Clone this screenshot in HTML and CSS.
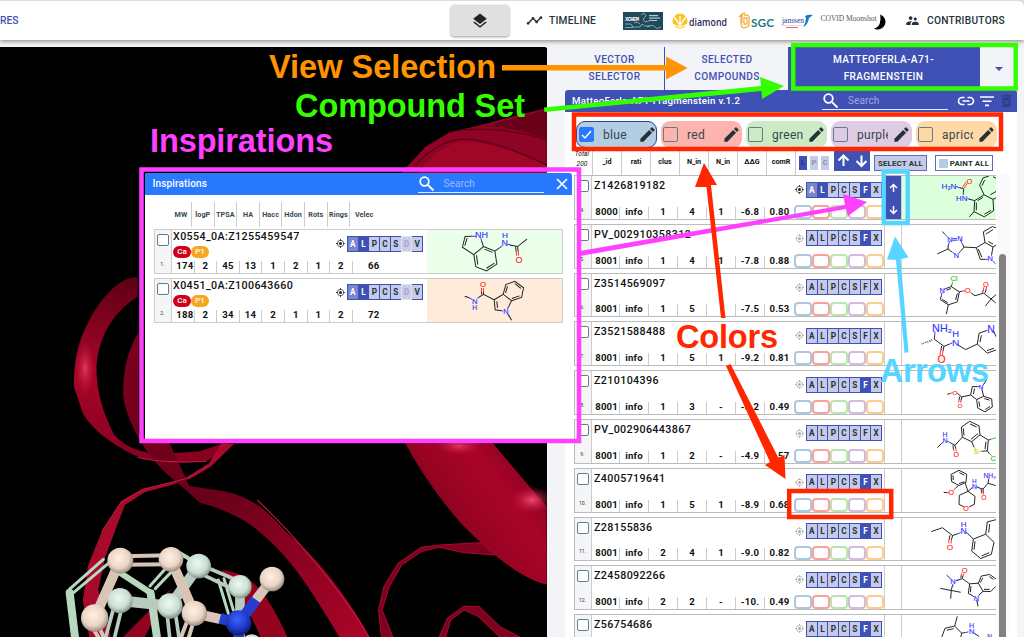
FILE: index.html
```html
<!DOCTYPE html>
<html lang="en">
<head>
<meta charset="utf-8">
<title>Fragalysis</title>
<link rel="stylesheet" href="styles.css">
</head>
<body>
<header class="topbar">
  <span class="nav-link">RES</span>
  <button class="view-btn" aria-label="Layers"><svg width="18" height="18" viewBox="0 0 24 24"><path fill="#222" d="M12 16l7.36-5.73L21 9l-9-7-9 7 1.63 1.27zM12 18.54l-7.38-5.73L3 14.07l9 7 9-7-1.63-1.27z"/></svg></button>
  <div class="nav-item timeline"><svg width="17" height="17" viewBox="0 0 24 24"><path fill="#263238" d="M23 8c0 1.1-.9 2-2 2-.18 0-.35-.02-.51-.07l-3.56 3.55c.05.16.07.34.07.52 0 1.1-.9 2-2 2s-2-.9-2-2c0-.18.02-.36.07-.52l-2.55-2.55c-.16.05-.34.07-.52.07s-.36-.02-.52-.07l-4.55 4.56c.05.16.07.33.07.51 0 1.1-.9 2-2 2s-2-.9-2-2 .9-2 2-2c.18 0 .35.02.51.07l4.56-4.55C8.02 9.36 8 9.18 8 9c0-1.1.9-2 2-2s2 .9 2 2c0 .18-.02.36-.07.52l2.55 2.55c.16-.05.34-.07.52-.07s.36.02.52.07l3.55-3.56C19.02 8.35 19 8.18 19 8c0-1.1.9-2 2-2s2 .9 2 2z"/></svg>TIMELINE</div>
  <svg class="logos" width="266" height="30" viewBox="622 3 266 30">
    <rect x="623" y="9" width="40" height="18" fill="#20495c"/>
    <text x="625" y="18" class="lg-xchem" textLength="14">XCHEM</text>
    <g fill="none" stroke="#b6cbd3" stroke-width=".7"><path d="M625 21h6l2 3h7l2-3 3 2h5M625 24.500h8M641 12l3-2 2 3-3 3 2 3 4-1M647 24q6-3 8 0t6 0M634 20l3-1 3 2"/></g>
    <g fill="#b6cbd3"><rect x="649" y="12" width="9" height="1.200"/><rect x="649" y="14.500" width="11" height="1.200"/><rect x="649" y="17" width="8" height="1"/></g>
    <circle cx="680" cy="18" r="7.500" fill="#fbc521"/>
    <path d="M680 25v-12M680 22l-6-8M680 22l6-8M679 24l-7-3M681 24l7-3" stroke="#fff" stroke-width="1.300" fill="none"/>
    <text x="689" y="23" class="lg-diamond" textLength="38" lengthAdjust="spacingAndGlyphs">diamond</text>
    <path d="M741 12v9q0 4 4 4M745 10q-3 0-3 3v7M744 12h3q3 1 2 5v5q-1 3-4 2M744 15h3v6h-3zM739 14l3-3" fill="none" stroke="#f6b042" stroke-width="1.300"/>
    <text x="751" y="23.500" class="lg-sgc" textLength="23" lengthAdjust="spacingAndGlyphs">SGC</text>
    <text x="782" y="20" class="lg-janssen" textLength="22">janssen</text>
    <path d="M782 22.500h20" stroke="#c8cde0" stroke-width=".6"/><path d="M786 24.500h12" stroke="#ee5a5a" stroke-width=".9"/>
    <path d="M805 13q4-2 8-1l-4 3q-1 7-6 9q3-4 3-9z" fill="#1a7bc0"/>
    <text x="820.500" y="17.500" class="lg-covid" textLength="56">COVID Moonshot</text>
    <path d="M881 12.500a7 7 0 0 1-5 13q6-2 5-13z" fill="#000" stroke="#000" stroke-width="1.300"/>
  </svg>
  <div class="nav-item contributors"><svg width="15" height="15" viewBox="0 0 24 24"><path fill="#263238" d="M16.500 12c1.380 0 2.490-1.120 2.490-2.500S17.880 7 16.500 7 14 8.120 14 9.500s1.120 2.500 2.500 2.500zM9 11c1.660 0 2.990-1.340 2.990-3S10.660 5 9 5 6 6.340 6 8s1.340 3 3 3zm7.500 3c-1.830 0-5.500.92-5.500 2.750V19h11v-2.250c0-1.830-3.670-2.750-5.500-2.750zM9 13c-2.330 0-7 1.170-7 3.500V19h7v-2.250c0-.85.33-2.340 2.370-3.470C10.500 13.100 9.660 13 9 13z"/></svg>CONTRIBUTORS</div>
</header>
<main class="workspace">
  <section class="viewer">
    <svg width="547" height="590" viewBox="0 47 547 590">
      <defs>
        <linearGradient id="rib" x1="0" y1="0" x2="0" y2="1"><stop offset="0" stop-color="#5c0014"/><stop offset=".5" stop-color="#a80528"/><stop offset="1" stop-color="#850020"/></linearGradient>
        <linearGradient id="ribB" x1="0" y1="0" x2="1" y2="1"><stop offset="0" stop-color="#7a001c"/><stop offset=".45" stop-color="#69001a"/><stop offset="1" stop-color="#ad0429"/></linearGradient>
        <linearGradient id="ribD" gradientUnits="userSpaceOnUse" x1="1180" y1="900" x2="1500" y2="680"><stop offset="0" stop-color="#4d0011"/><stop offset=".35" stop-color="#960322"/><stop offset=".7" stop-color="#aa0429"/><stop offset="1" stop-color="#86001e"/></linearGradient>
        <radialGradient id="shine"><stop offset="0" stop-color="#ef4a6e"/><stop offset="1" stop-color="#c0103a" stop-opacity="0"/></radialGradient>
        <radialGradient id="cream" cx=".45" cy=".4" r=".6"><stop offset="0" stop-color="#fff0e4"/><stop offset=".65" stop-color="#ead5c5"/><stop offset="1" stop-color="#9b8b7f"/></radialGradient>
        <radialGradient id="mint" cx=".45" cy=".4" r=".6"><stop offset="0" stop-color="#ecfaf1"/><stop offset=".65" stop-color="#cbdfd3"/><stop offset="1" stop-color="#82958a"/></radialGradient>
        <radialGradient id="blue" cx=".45" cy=".35" r=".6"><stop offset="0" stop-color="#3a62ff"/><stop offset=".6" stop-color="#2140d0"/><stop offset="1" stop-color="#101f80"/></radialGradient>
      </defs>
      <rect y="47" width="547" height="590" fill="#000"/>
      <g transform="scale(.37 .3333)">
        <path fill="#8d0424" d="M1085 518L1150 440L1215 397L1300 375L1400 345L1478 325V518z"/>
        <path fill="#6b001a" d="M1310 378L1400 352L1478 330V415Q1400 385 1310 378z"/>
        <path fill="#a00727" d="M1130 518L1180 460L1230 425Q1340 420 1478 498V518z"/>
        <path fill="none" stroke="#5e0017" stroke-width="4" d="M1120 500Q1190 410 1270 418T1478 495M1215 397Q1320 370 1478 418"/>
      </g>
      <g transform="translate(0 240) scale(.3571 .3333)">
        <path fill="url(#rib)" d="M385 112C340 108 290 165 255 230C225 290 207 340 207 440L232 520C260 570 300 600 345 628C385 655 430 668 520 668L578 664L655 612H620L560 634L480 640C400 648 350 620 320 585C290 520 270 460 270 380C275 300 310 220 385 170z"/>
        <ellipse cx="238" cy="385" rx="28" ry="85" fill="url(#shine)" opacity=".75"/>
        <path fill="#a80a2c" d="M620 610L585 670L515 720L400 748L340 785L285 875L247 975L232 1080L250 1191H310L275 1050L295 950L330 850L350 795L405 757L480 735L535 715L590 680L655 612z"/>
        <path fill="#000" d="M350 790L405 757L480 736L540 760L700 900L860 1191H760L640 960L340 930L318 885z" opacity="0"/>
        <path fill="url(#ribB)" d="M388 275C350 350 345 400 345 470C355 530 375 570 400 615C420 650 450 690 510 740L560 788C640 810 700 850 720 870C800 940 850 1010 950 1191H1035C990 1100 900 960 800 875C740 800 690 765 620 752L530 738L475 610L388 580z"/>
        <path fill="none" stroke="#c21a40" stroke-width="3" d="M578 664L520 666Q430 666 385 652M582 676L515 718L400 748L340 785L285 875M720 780Q810 870 900 990T1033 1191"/>
        <path fill="url(#ribD)" d="M1135 610C1200 740 1290 860 1350 910C1420 985 1500 1030 1531 1033V800L1380 610z"/>
        <ellipse cx="1490" cy="780" rx="60" ry="42" fill="url(#shine)"/><ellipse cx="1285" cy="618" rx="65" ry="28" fill="url(#shine)" opacity=".75"/>
        <path fill="#7d001e" stroke="#a30a2b" stroke-width="3" d="M1385 945L1300 938L1230 922L1180 935L1125 975L1090 1040L1070 1110L1100 1191H1068L1060 1110L1075 1040L1115 970L1180 922L1230 915L1350 908z"/>
        <path fill="#7d001e" stroke="#a30a2b" stroke-width="3" d="M1230 1191L1253 1135L1300 1098L1342 1100L1400 1160L1455 1191H1400L1340 1130L1300 1110L1262 1140L1248 1191z"/>
        <path fill="#93031f" d="M620 990C700 1000 740 1040 805 1191H730L690 1100zM480 1045L345 1191H405L440 1120z"/>
      </g>
      <g transform="translate(0 530) scale(.3333)" fill="none" stroke-linecap="round">
        <g stroke="#b6d8bf"><path stroke-width="24" d="M209 188L226 330"/><path stroke-width="9" d="M208 178L310 88M218 190L325 100M450 168L495 118M466 176L515 125M655 150L685 250M672 146L700 240"/><path stroke-width="18" d="M360 128L452 188"/><path stroke-width="24" d="M452 190L472 330"/><path stroke-width="12" d="M540 70L565 85"/></g>
        <g stroke="#b7cbbf"><path stroke-width="32" d="M360 212L510 228L596 108"/><path stroke-width="11" d="M610 108L710 150M600 130L705 180M342 230L315 330M365 235L342 330M500 240L510 330M525 240L538 330"/><path stroke-width="29" d="M720 170V330"/></g>
        <g stroke="#d9c5b5"><path stroke-width="30" d="M360 92L284 263M512 88L583 250"/><path stroke-width="12" d="M365 79L512 76M365 104L512 103M565 265L540 330M582 270L564 330M292 280L315 330M270 280L300 330"/><path stroke-width="30" d="M583 250L655 266M816 147L770 207"/></g>
        <g stroke="#243fce" stroke-width="32" stroke-linecap="butt"><path d="M660 265L716 280L768 209M716 280V330"/></g>
        <g fill="url(#mint)" stroke="none"><circle cx="596" cy="108" r="37"/><circle cx="360" cy="212" r="38"/><circle cx="510" cy="228" r="38"/><circle cx="720" cy="170" r="35"/><circle cx="755" cy="345" r="32"/></g>
        <g fill="url(#cream)" stroke="none"><circle cx="361" cy="92" r="39"/><circle cx="513" cy="88" r="37"/><circle cx="284" cy="264" r="41"/><circle cx="583" cy="250" r="38"/><circle cx="816" cy="147" r="37"/></g>
        <circle cx="716" cy="279" r="38" fill="url(#blue)"/>
      </g>
    </svg>
  </section>
  <section class="panel">
    <nav class="tabs">
      <div class="tab">VECTOR<br>SELECTOR</div>
      <div class="tab tab-selected">SELECTED<br>COMPOUNDS</div>
      <div class="tab tab-active">MATTEOFERLA-A71-<br>FRAGMENSTEIN</div>
      <div class="tab-menu"></div>
    </nav>
    <div class="panel-head">
      <span class="panel-title">MatteoFerla-A71-Fragmenstein v.1.2</span>
      <div class="search"><svg class="mag" viewBox="0 0 17 17"><circle cx="6.500" cy="6.500" r="4.300"/><path d="M9.800 9.800L15.500 15.500"/></svg><span>Search</span></div>
      <svg class="head-icons" width="58" height="18" viewBox="0 0 58 18">
        <path d="M8.500 5.500H6a3.500 3.500 0 0 0 0 7H8.500M11.500 5.500H14a3.500 3.500 0 0 1 0 7H11.500M6.500 9h7" fill="none" stroke="#fff" stroke-width="1.600"/>
        <path d="M24 5h14M26.500 9.200h9M29 13.400h4" stroke="#fff" stroke-width="1.600"/>
        <path d="M45.500 4h10M48.500 3h4" stroke="#303c8c" stroke-width="1.300"/><path d="M46.500 5.500h8V15h-8z" fill="#303c8c"/><path d="M48.500 8.200l4 4M52.500 8.200l-4 4" stroke="#3f51b5" stroke-width="1.200"/>
      </svg>
    </div>
    <div class="panel-body">
      <div class="chips" id="chips"></div>
      <div class="thead">
        <div class="total">Total<br>200</div>
        <div class="hcell">_id</div><div class="hcell">rati</div><div class="hcell">clus</div><div class="hcell">N_in</div><div class="hcell">N_in</div><div class="hcell">ΔΔG</div><div class="hcell">comR</div>
        <div class="bulk">
          <div class="lpc"><b class="on">L</b><b>P</b><b>C</b></div>
          <div class="bulk-arrows"><svg width="36" height="20" viewBox="0 0 36 20"><path d="M9.500 15V5M4.500 9.500l5-5 5 5M27.500 4.500v10M22.500 10l5 5 5-5" fill="none" stroke="#fff" stroke-width="2"/></svg></div>
          <button class="select-all">SELECT ALL</button>
          <button class="paint-all"><i></i>PAINT ALL</button>
        </div>
      </div>
      <div class="list">
        <div class="rows" id="rows"></div>
        <div class="scroll"><div class="thumb"></div></div>
      </div>
    </div>
  </section>
</main>
<section class="dialog">
  <div class="dialog-head"><span>Inspirations</span>
    <div class="search"><svg class="mag" viewBox="0 0 17 17"><circle cx="6.500" cy="6.500" r="4.300"/><path d="M9.800 9.800L15.500 15.500"/></svg><span>Search</span></div>
    <svg class="close" width="12" height="12" viewBox="0 0 12 12"><path d="M1 1l10 10M11 1L1 11" stroke="#fff" stroke-width="1.700"/></svg>
  </div>
  <div class="props"><span>MW</span><span>logP</span><span>TPSA</span><span>HA</span><span>Hacc</span><span>Hdon</span><span>Rots</span><span>Rings</span><span>Velec</span></div>
  <div id="insp" class="insp"></div>
</section>
<svg class="notes" width="1024" height="637" viewBox="0 0 1024 637">
  <g fill="#ff9300"><text x="269" y="78" textLength="227">View Selection</text><path d="M502 65h164v-8.500l21.500 11.500-21.500 11.500v-9H502z"/></g>
  <g fill="#33ff00"><text x="295" y="117" textLength="230">Compound Set</text><path d="M544 107.500L761 86l-1-9 24 9-22 13-.600-8L544.500 112z"/><rect x="793.200" y="45" width="222.500" height="43.500" fill="none" stroke="#33ff00" stroke-width="4.500"/></g>
  <g fill="#ff40ff"><text x="150" y="152" textLength="183">Inspirations</text><path d="M580 251L845 205l-2-11 24 8-19 14-2-7L580 256z"/><rect x="141.500" y="169.500" width="437.500" height="271.500" fill="none" stroke="#ff40ff" stroke-width="4.500"/></g>
  <g fill="#ff2600"><rect x="574" y="114.500" width="427" height="34.500" fill="none" stroke="#ff2600" stroke-width="4.500"/><path d="M721 318l-14.500-131H695l9-24 13 22h-6l14.500 133z"/><path d="M726 366l44 96-5 3 20.500 14-1-24-6 3-48-94z"/><text x="676" y="348" textLength="102">Colors</text><rect x="789.200" y="491" width="102" height="26" fill="none" stroke="#ff2600" stroke-width="4.500"/></g>
  <g fill="#55d5ff"><rect x="883.700" y="171.500" width="24" height="51.500" fill="none" stroke="#55d5ff" stroke-width="4.500"/><path d="M904.500 353L896 260l-9-.500 8-23 13.500 21-8 1.500 8 93z"/><text x="880" y="382" textLength="109">Arrows</text></g>
</svg>
<script src="app.js"></script>
</body>
</html>
```
FILE: styles.css
```css
*{box-sizing:border-box}
body{margin:0;width:1024px;height:637px;overflow:hidden;background:#f3f4f7;font-family:Roboto,"Liberation Sans",sans-serif;color:#111;position:relative}
button{font-family:inherit;padding:0;margin:0;border:0}
svg{display:block}
.topbar{height:40px;background:#fff;border-top:1px solid #ddd;border-top-right-radius:6px;box-shadow:0 1px 5px rgba(0,0,0,.5);display:flex;align-items:center;position:relative}
.nav-link{width:451px;color:#3f51b5;font-size:10.3px;font-weight:500}
.view-btn{width:58px;height:31px;background:#e0e0e0;border-radius:3px;box-shadow:0 1px 3px rgba(0,0,0,.4);display:grid;place-items:center}
.nav-item{display:flex;align-items:center;font-size:10.2px;font-weight:500;letter-spacing:.25px;color:#263238}
.timeline{margin-left:17px;width:96px;gap:6px}
.contributors{margin-left:17px;gap:7px;letter-spacing:.25px}
.lg-xchem{font:bold 5.500px "Liberation Mono",monospace;fill:#fff}
.lg-diamond{font:600 11.500px "Open Sans",sans-serif;fill:#2b2b5c}
.lg-sgc{font:bold 12px Lato,sans-serif;fill:#237d7d}
.lg-janssen{font:7.500px "Liberation Serif",serif;fill:#1f3b8c}
.lg-covid{font:7.500px "Liberation Serif",serif;fill:#555}
.workspace{display:flex;height:590px;margin-top:7px}
.viewer{width:547px;background:#000;border-top-right-radius:3px;overflow:hidden;flex:none}
.panel{width:452px;margin-left:18px;display:flex;flex-direction:column}
.tabs{display:flex;height:43px;color:#3f51b5;font-size:10.1px;font-weight:500;line-height:17.3px;letter-spacing:.38px;text-align:center}
.tab{width:100px;padding-top:4px;border-right:1px solid #3f51b5}
.tab-selected{width:123px;border-right:0;padding-left:1px}
.tab-active{width:192px;background:#3f51b5;color:#fff}
.tab-menu{flex:1;display:grid;place-items:center}
.tab-menu::after{content:"";border:4px solid transparent;border-top-color:#3f51b5;border-bottom:0}
.panel-head{height:22px;background:#3f51b5;border-radius:3px 3px 0 0;color:#fff;display:flex;align-items:center;padding-left:7px}
.panel-title{width:250px;font-size:9.7px;font-weight:500;letter-spacing:.28px;white-space:nowrap;padding-bottom:2px}
.search{width:126px;height:17px;border-bottom:1px solid #e6eaff;display:flex;align-items:center;font-size:10px;color:rgba(255,255,255,.5);gap:9px;letter-spacing:.1px}
.search span{padding-bottom:1px}
.mag{width:17px;height:17px;fill:none;stroke:#fff;stroke-width:1.800}
.head-icons{margin-left:8px}
.panel-body{background:#fff;flex:1;padding-left:9px;overflow:hidden}
.chips{display:flex;gap:4px;padding:9px 0 0 2px;height:39px}
.chip{width:81px;height:27px;border-radius:9px;display:flex;align-items:center;font-size:12px;color:#37474f;padding-left:2px;flex:none;letter-spacing:.3px}
.chip.checked{border:1.500px solid #303f9f}
.chip span{width:31px;margin:0 4px 0 9px;overflow:hidden;flex:none}
.chip svg{flex:none}
.box{width:15px;height:15px;border:1.700px solid #607d8b;border-radius:2px;display:grid;place-items:center;flex:none}
.box.on{background:#2979ff;border-color:#2979ff}
.thead{display:flex;height:24px;font-size:7.200px;font-weight:700}
.total{width:18px;font-size:6.600px;font-weight:400;font-style:italic;line-height:10px;text-align:center;padding-right:2px;margin-top:-2px;flex:none}
.hcell{width:29px;flex:none;text-align:center;padding-top:6px;border-left:1px solid #ccc}
.bulk{display:flex;align-items:flex-start;padding-left:3px;border-left:1px solid #ccc}
.lpc{display:flex;gap:3px;padding-top:5px}
.lpc b{width:8px;height:14px;background:#c5cae9;color:#9299b5;line-height:14px;text-align:center;font-size:8px}
.lpc .on{background:#3f51b5;color:#29388b}
.bulk-arrows{margin-left:5px;width:36px;height:20px;background:#3f51b5}
.select-all,.paint-all{margin:4px 0 0 4px;height:16px;width:53px;border:1px solid #5c6bc0;background:#c5cae9;font-size:7.900px;font-weight:700;color:#263238;white-space:nowrap;letter-spacing:.15px}
.paint-all{margin-left:8px;width:58px;background:#fff;display:flex;align-items:center;justify-content:center;gap:2px}
.paint-all i{width:9px;height:9px;background:#b3cde3}
.list{display:flex}
.rows{width:422px;flex:none}
.row{height:44.800px;margin-bottom:4px;border:1px solid #bbb;border-right:0;display:flex}
.pick{width:17px;flex:none;background:#f4f5f7;border-right:1px solid #ccc;display:flex;flex-direction:column;align-items:center;justify-content:space-between;padding:4px 1px 6px 0}
.pick .box{width:12px;height:12px;background:#fff;border-width:1.500px}
.pick small{font-size:5.200px;line-height:6px;color:#333}
.info{width:202px;flex:none;display:flex;flex-direction:column;justify-content:space-between}
.name{font-size:10.700px;line-height:12px;font-weight:500;padding:4px 0 0 2px;letter-spacing:.38px;white-space:nowrap}
.vals{display:flex;height:12px}
.vals b{width:29px;flex:none;border-right:1px solid #ccc;text-align:center;font-size:9.600px;line-height:10px;letter-spacing:.2px;white-space:nowrap}
.vals b:first-child{text-align:right;width:28px;padding-right:1px}
.vals b:last-child{border:0}
.acts{width:91px;flex:none;border-right:1px solid #ccc;display:flex;flex-direction:column;justify-content:space-between;padding-top:5.500px}
.line{display:flex;align-items:center;padding-left:1px;gap:2px}
.eye{opacity:.38;flex:none}.eye.on{opacity:1}
.tags{display:flex;border:1px solid #3f51b5;height:16px;background:#3f51b5;gap:1px;width:76px;flex:none}
.tags b{flex:1;background:#c5cae9;font-size:8.200px;line-height:14px;text-align:center;color:#263238}
.tags .on{background:#3f51b5;color:#fff}.tags .half{background:#7986cb;color:#fff}.tags .off{color:#a2a8cc;background:#c9cdea;box-shadow:0 0 0 1px #dfe2f3}
.colors{display:flex;height:14px;flex:none}
.colors i{width:18.100px;height:14px;border:2px solid;border-radius:4px;flex:none}
.move{width:17px;flex:none;border-right:1px solid #ccc}
.move.on{background:#3f51b5}
.mol{flex:1;overflow:hidden}
.mol svg,.imol svg{width:100%;height:100%}
.bonds{fill:none;stroke:#222;stroke-width:3}
.bn{stroke:#33f}.br{stroke:#f33}.bg{stroke:#2c2}.by{stroke:#cc0}
.atom{font-family:"Liberation Sans",sans-serif;text-anchor:middle}
.scroll{width:12px;margin-left:1px;background:#fafafa;height:462px;padding:79px 3px 0 2px}
.thumb{background:#818181;width:7px;height:400px;border-radius:4px 4px 0 0}
.dialog{position:absolute;left:145px;top:173px;width:427px;height:266px;background:#fff;border-radius:3px 3px 0 0;overflow:hidden}
.dialog-head{height:22px;background:#2979ff;color:#fff;display:flex;align-items:center;font-size:10px;font-weight:500;padding-left:7.500px}
.dialog-head>span{width:265px;letter-spacing:.15px;padding-bottom:1px}
.dialog-head .search{font-weight:400}
.close{margin-left:12px}
.props{display:flex;margin:7px 0 0 23px;font-size:7.200px;font-weight:700;color:#37474f;height:25px;letter-spacing:.1px}
.props span{width:22.600px;flex:none;border-right:1px solid #ccc;text-align:center;line-height:26px;white-space:nowrap}
.props span:first-child{width:24px;padding-left:3px}
.props span:last-child{border:0;width:28px}
.insp{padding:2px 9px 0}
.insp .row{border:1px solid #ccc;margin-bottom:4px}
.insp .info{width:163px}
.insp .name{padding:1px 0 0 1px}
.sites{display:flex;height:12px;margin:3px 0 0 1px}
.sites b{width:18px;height:12px;border-radius:6px;background:#d0021b;color:#fff;font-size:8px;line-height:11px;font-weight:500;text-align:center}
.sites b+b{background:#f5a623}
.insp .vals b,.insp .vals b:first-child{width:22.600px;text-align:center;padding:0}
.insp .vals b:first-child{padding-left:4px}
.insp .vals b:last-child{width:38px;padding-left:4px}
.insp .acts{border:0;width:72px;flex:1}
.imol{width:135px;flex:none}
.notes{position:absolute;left:0;top:0;z-index:5}
.notes text{font:bold 32.500px "Liberation Sans",Arial,sans-serif;stroke-width:.5}
```
FILE: app.js
```js
const COLORS = ['#b3cde3', '#fbb4ae', '#ccebc5', '#decbe4', '#fed9a6'];
const RIMS = ['#abc8e0', '#faa19b', '#bce4b3', '#d3bbdc', '#fdcb8a'];
const NAMES = ['blue', 'red', 'green', 'purple', 'apricot'];

const PEN = '<svg width="19" height="19" viewBox="0 0 24 24"><path fill="#263238" d="M3 17.250V21h3.750L17.810 9.940l-3.750-3.750zM20.710 7.040a1 1 0 0 0 0-1.410l-2.340-2.340a1 1 0 0 0-1.410 0l-1.830 1.830 3.750 3.750z"/></svg>';
const TICK = '<svg width="11" height="11" viewBox="0 0 11 11"><path d="M1 6l3 3 6-7" fill="none" stroke="#fff" stroke-width="1.500"/></svg>';
const eye = on => `<svg class="eye ${on ? 'on' : ''}" width="9" height="9" viewBox="0 0 9 9"><circle cx="4.500" cy="4.500" r="1.500" fill="#222"/><circle cx="4.500" cy="4.500" r="3.200" fill="none" stroke="#222" stroke-width=".7"/><path d="M4.500 0v2M4.500 7v2M0 4.500h2M7 4.500h2" stroke="#222" stroke-width=".8"/></svg>`;
const UPDOWN = '<svg width="16" height="43" viewBox="0 0 16 43"><path d="M8.500 16V9M5 12L8.500 8.500 12 12M8.500 30v7M5 34L8.500 37.500 12 34" fill="none" stroke="#fff" stroke-width="1.500"/></svg>';

// m.k black bonds, m.n / m.o / m.g / m.s coloured bonds, m.a atoms: [label, x, y, colour, size]
function molecule(box, m) {
  const p = (d, c) => d ? `<path class="${c}" d="${d}"/>` : '';
  const atoms = m.a.map(([t, x, y, c, s = 20]) => {
    const f = s * 1.12;
    return `<text class="atom" x="${x}" y="${y + f * .36}" font-size="${f}" fill="${c}" stroke="${c}" stroke-width=".4">${t}</text>`;
  }).join('');
  return `<svg viewBox="${box}" preserveAspectRatio="none"><g class="bonds">${p(m.k, '')}${p(m.n, 'bn')}${p(m.o, 'br')}${p(m.g, 'bg')}${p(m.s, 'by')}</g>${atoms}</svg>`;
}
const B = '#33f', R = '#f22', G = '#1c1';

document.getElementById('chips').innerHTML = NAMES.map((n, i) =>
  `<div class="chip ${i ? '' : 'checked'}" style="background:${COLORS[i]}"><div class="box ${i ? '' : 'on'}">${i ? '' : TICK}</div><span>${n}</span>${PEN}</div>`).join('');

const rows = [
  ['Z1426819182', '8000 info 1 4 1 -6.8 0.80', 'F', '339 198 282 132', {
    k: 'M512 234L524 237M524 237L523 250M540 269L557 274L555 308L586 324L614 305L612 270L585 256L557 274M555 308L541 324M585 256L572 226L582 204L600 198M579 228L587 210M612 270L624 264M586 316L606 304M582 264L566 274M604 256L624 244M621 205L612 200M562 304V280',
    n: 'M500 230L514 235M523 250V257M535 268L543 270', o: 'M524 237L535 221M520 233L531 217',
    a: [['H₂N', 480, 229, B, 22], ['O', 541, 215, R], ['HN', 518, 266, B, 21]]
  }],
  ['PV_002910358312', '8001 info 1 4 1 -7.8 0.88', 'F', '339 344 282 132', {
    k: 'M460 364L467 372M478 405L477 418L445 433M477 418L490 428M520 402L525 412L514 426M525 412L562 414L588 398L583 365L610 349L630 356M562 414L574 450L590 450M568 418L579 444M588 398L612 412L608 434M612 412L630 400M591 372L612 358M598 395L612 403',
    n: 'M467 372L476 381M482 394L478 406M490 386H504M490 391H504M514 390L520 402M514 426L508 432M491 428L496 433M590 450L598 449M607 439L609 432M611 455L620 464',
    a: [['N', 483, 388, B], ['N', 513, 384, B], ['N', 502, 437, B], ['N', 604, 447, B]]
  }],
  ['Z3514569097', '8001 info 1 5 &nbsp; -7.5 0.53', '', '369 71 282 132', {
    k: 'M500 116L517 110L541 126L535 157L508 166L484 150L487 138M508 166L502 195M502 121L516 116M535 131L530 151M506 160L490 149M541 126L550 124M577 130L588 138L614 130L636 148L619 170M636 148L652 134M636 148L650 160M610 128L614 118M618 130L621 118M517 110L519 103',
    n: 'M500 116L494 119M487 138L489 128', o: 'M550 124L558 123M574 127L579 132M613 120L615 111M621 120L623 111', g: 'M519 103L521 95',
    a: [['N', 490, 122, B], ['Cl', 525, 84, G], ['O', 566, 122, R], ['O', 621, 103, R]]
  }],
  ['Z3521588488', '8001 info 1 5 1 -9.2 0.81', '', '369 217 282 132', {
    k: 'M467 258L466 270L495 292L512 285M458 271L459 275M452 273L454 278M446 276L447 280M440 278L441 282M434 281L434 284M429 283V286M495 292L492 306M488 291L486 305M540 290L560 302L595 285L600 252L620 244M603 279L607 258M595 285L625 313L652 303M624 305L645 298M646 250L652 264',
    n: 'M468 246L467 259M512 285L520 281M536 287L541 290M617 246L626 242M643 245L647 252', o: 'M492 304L490 320M485 304L483 319',
    a: [['NH₂', 489, 235, B, 29], ['H', 530, 253, B, 25], ['N', 530, 280, B, 27], ['O', 488, 332, R, 28], ['N', 636, 241, B, 28]]
  }],
  ['Z210104396', '8001 info 1 3 - -8.2 0.49', 'F', '369 364 282 132', {
    k: 'M505 436L514 433M536 434L548 444L575 438L580 412L596 412M548 444L546 455M542 443L540 454M583 435L587 418M575 438L593 452L614 442L609 422M593 452L596 478L618 490L640 475L638 450L614 442M600 458L602 474M619 483L633 473M632 454L616 449M614 405L622 392',
    n: 'M595 412L601 412M608 417L610 424M611 409L615 403', o: 'M514 433L521 431M534 431L538 436M546 454L545 462M540 453L539 461',
    a: [['O', 528, 430, R, 17], ['O', 543, 471, R, 17], ['N', 606, 413, B, 17]]
  }],
  ['PV_002906443867', '8001 info 1 2 - -4.9 0.57', '', '369 510 282 132', {
    k: 'M475 595L486 584M512 579L528 588L550 563L547 532L572 514L600 528L603 556L578 577L550 563M528 588L530 598M522 588L523 600M555 558L553 536M573 522L593 532M597 552L576 569M603 556L628 572L625 605L608 607M578 577L585 594M621 577L618 600M628 572L636 569M625 605L632 615',
    n: 'M486 584L492 579M505 575L512 579', o: 'M530 597L532 607M523 598L525 607', s: 'M586 594L589 600M600 607L610 606', g: 'M634 570L652 564M632 614L638 620',
    a: [['H', 498, 556, B, 18], ['N', 498, 574, B, 19], ['O', 532, 617, R, 19], ['S', 592, 607, '#cc0', 19], ['Cl', 645, 628, G, 20]]
  }],
  ['Z4005719641', '8001 info 1 5 1 -8.9 0.68', 'F', '369 86 282 132', {
    k: 'M540 90L563 102L561 127L540 137L518 125L516 103ZM541 97L556 105M556 125L540 131M523 120L522 106M538 137L529 146M504 159L494 158M558 128L567 155L588 170L586 195L570 203M555 203L540 195L541 167L567 155L578 145M594 142L612 148L627 130L650 137M612 148L613 158M606 148L608 159M627 130L629 118',
    n: 'M575 148L581 142M592 140L600 144M629 119L630 113', o: 'M530 145L524 151M510 159L503 159M569 203L573 201M550 201L556 204M613 157L614 164M608 157L609 164',
    a: [['O', 517, 159, R, 19], ['O', 561, 207, R, 19], ['H', 586, 123, B, 17], ['N', 586, 140, B, 18], ['O', 615, 173, R, 18], ['NH₂', 632, 106, B, 18]]
  }],
  ['Z28155836', '8001 info 2 4 1 -9.0 0.82', 'F', '369 233 282 132', {
    k: 'M457 275L490 263L521 287L538 281M521 287L517 301M513 286L510 300M566 281L583 298L578 335L605 358L637 345L645 308L620 283L583 298M588 305L585 331M608 350L631 340M620 283L625 245L652 238M629 278L632 252',
    n: 'M538 281L545 278M561 277L567 282', o: 'M517 300L516 312M510 299L509 311',
    a: [['H', 554, 252, B, 21], ['N', 554, 273, B, 23], ['O', 513, 324, R, 22]]
  }],
  ['Z2458092266', '8001 info 2 2 - -10. 0.49', 'F', '369 379 282 132', {
    k: 'M503 407L512 416M532 424L550 418L572 434L568 464L582 471M550 418L552 409M545 416L547 408M521 437L517 452M484 448L545 460M517 452L515 480M572 434L598 432L612 457L600 468M576 441L574 460M598 432L607 410L632 405L652 420M604 430L611 416M612 457L635 458L650 442M615 451L632 451M631 412L643 420M594 487L597 503',
    n: 'M512 416L516 420M530 425L538 422M522 435L521 442M580 470L585 474M602 467L598 472M593 484L595 491', o: 'M552 410L555 402M546 409L549 401',
    a: [['N', 522, 427, B, 20], ['O', 557, 393, R, 20], ['N', 592, 478, B, 20]]
  }],
  ['Z56754686', '8001 info 2 2 - -9.0 0.50', 'F', '369 526 282 132', {
    k: 'M535 530L527 560L498 567L488 595M524 568L503 573M527 560L548 582L543 605M548 582L560 580M588 584L600 592',
    n: 'M560 580L568 578M585 581L590 585',
    a: [['H', 578, 558, B, 19], ['N', 578, 578, B, 20], ['N', 632, 594, B, 18]]
  }]
];

const tags = (letters, on, half, off) => '<div class="tags">' + [...letters].map(c =>
  `<b class="${on.includes(c) ? 'on' : half.includes(c) ? 'half' : off.includes(c) ? 'off' : ''}">${c}</b>`).join('') + '</div>';
const values = s => '<div class="vals">' + s.split(' ').map(v => `<b>${v}</b>`).join('') + '</div>';

document.getElementById('rows').innerHTML = rows.map(([name, vals, on, box, mol], i) => `
  <div class="row"><div class="pick"><div class="box"></div><small>${i + 4}.</small></div>
  <div class="info"><div class="name">${name}</div>${values(vals)}</div>
  <div class="acts"><div class="line">${eye(!i)}${tags('ALPCSFX', i ? on : 'LF', i ? '' : 'A', '')}</div>
  <div class="colors">${RIMS.map(c => `<i style="border-color:${c}"></i>`).join('')}</div></div>
  <div class="move ${i ? '' : 'on'}">${i ? '' : UPDOWN}</div>
  <div class="mol" style="background:${i ? '#fff' : '#dcffdc'}">${molecule(box, mol)}</div></div>`).join('');

const inspirations = [
  ['X0554_0A:Z1255459547', '174 2 45 13 1 2 1 2 66', '#ebffeb', '234 192 404 132', {
    k: 'M368 211L348 212L340 245L374 268L403 243L397 225M354 217L347 240M374 268L380 305L412 318L443 297L437 257L403 243M382 270L386 299M412 310L436 294M430 261L406 251M437 257L450 248M482 238L505 243L533 220M505 243L507 258M499 244L501 259',
    n: 'M380 211L367 211M395 218L398 227M450 248L458 242M476 236L484 238', o: 'M507 257L508 271M501 258L502 271',
    a: [['NH', 397, 208, B, 24], ['H', 467, 208, B, 22], ['N', 467, 233, B, 24], ['O', 509, 284, R, 24]]
  }],
  ['X0451_0A:Z100643660', '188 2 34 14 2 1 1 2 72', '#feebda', '234 338 404 132', {
    k: 'M347 391L360 396M390 394L403 385L435 402L438 433L456 436M403 385V376M397 385V376M443 407L445 427M435 402L462 385L487 405L478 424M462 385L470 355L497 345L523 365L517 395L487 405M469 381L475 361M497 352L515 367M511 390L488 398M478 448L487 465',
    n: 'M360 396L369 401M385 398L391 393M454 435L462 437M479 423L474 430M475 446L481 455', o: 'M403 377V366M397 377V366',
    a: [['O', 402, 355, R, 21], ['N', 377, 407, B, 20], ['H', 377, 425, B, 18], ['N', 470, 438, B, 20]]
  }]
];
document.getElementById('insp').innerHTML = inspirations.map(([name, vals, bg, box, mol], i) => `
  <div class="row"><div class="pick"><div class="box"></div><small>${i + 1}.</small></div>
  <div class="info"><div><div class="name">${name}</div><div class="sites"><b>Ca</b><b>P1</b></div></div>${values(vals)}</div>
  <div class="acts"><div class="line">${eye(true)}${tags('ALPCSDV', 'L', 'A', 'D')}</div></div>
  <div class="imol" style="background:${bg}">${molecule(box, mol)}</div></div>`).join('');
```
